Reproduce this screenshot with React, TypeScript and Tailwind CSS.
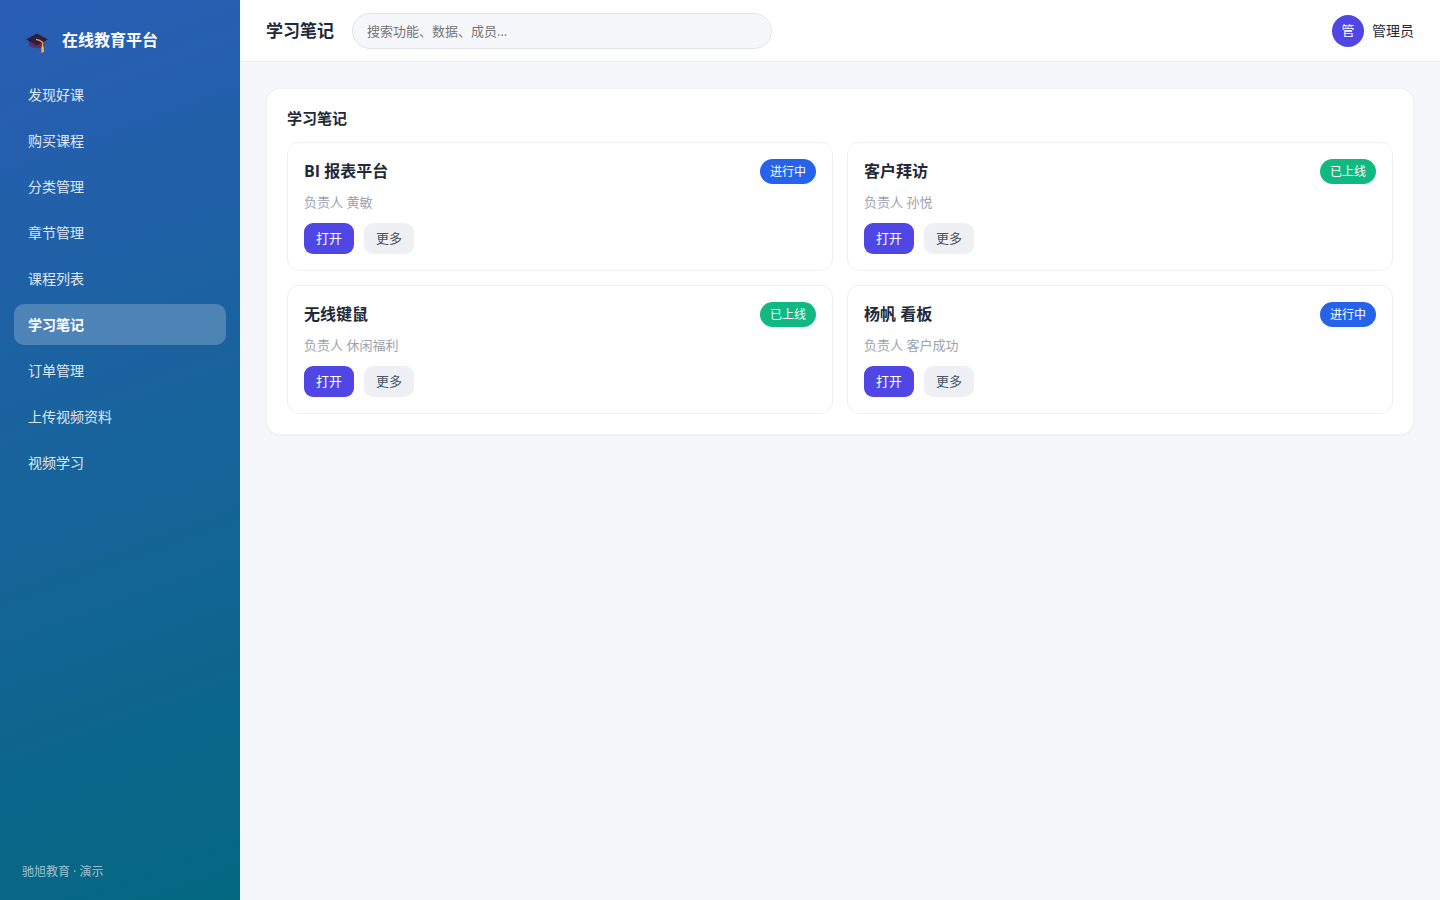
import { useState } from "react";
import { clsx } from "clsx";

type Status = "进行中" | "已上线";

interface Note {
  title: string;
  owner: string;
  status: Status;
}

const navItems = [
  "发现好课",
  "购买课程",
  "分类管理",
  "章节管理",
  "课程列表",
  "学习笔记",
  "订单管理",
  "上传视频资料",
  "视频学习",
];

const notes: Note[] = [
  { title: "BI 报表平台", owner: "黄敏", status: "进行中" },
  { title: "客户拜访", owner: "孙悦", status: "已上线" },
  { title: "无线键鼠", owner: "休闲福利", status: "已上线" },
  { title: "杨帆 看板", owner: "客户成功", status: "进行中" },
];

function CapIcon() {
  return (
    <svg width="24" height="26" viewBox="0 0 24 26" aria-hidden="true">
      <path d="M4 13v4.200c0 2.300 3.600 4 8 4 2.600 0 4.800-.5 6.200-1.500V13z" fill="#543267" />
      <path d="M12 6.600 23 12.600 15.500 16.600 12 18.200 1 12.600z" fill="#2f1c41" />
      <path d="M11 12.300c1.800.2 5.200 1.700 6.500 2.900V20.500" fill="none" stroke="#f9a52a" strokeWidth="1.200" />
      <path d="M16.400 19.600h2.300l.4 5.400-2.700.8z" fill="#fdb02c" />
    </svg>
  );
}

function Sidebar({ active, onSelect }: { active: string; onSelect: (item: string) => void }) {
  return (
    <aside className="flex w-60 shrink-0 flex-col bg-[linear-gradient(160deg,#2a5eb5,#046881)] px-3.5 pt-6 pb-[19px] text-white">
      <div className="flex h-8 items-center gap-[13px] px-[11px] text-base font-bold">
        <CapIcon />
        <span>在线教育平台</span>
      </div>
      <nav className="mt-[18px] flex flex-col gap-[5px]">
        {navItems.map((item) => (
          <a
            key={item}
            href="#"
            onClick={() => onSelect(item)}
            className={clsx(
              "rounded-[10px] px-3.5 py-[10px] text-sm leading-[21px]",
              item === active ? "bg-white/22 font-bold text-white" : "text-white/85"
            )}
          >
            {item}
          </a>
        ))}
      </nav>
      <div className="mt-auto px-2 text-xs leading-[18px] text-white/60">驰旭教育 · 演示</div>
    </aside>
  );
}

function TopBar({ title }: { title: string }) {
  return (
    <header className="flex h-[62px] items-center gap-[18px] border-b border-[#ebedf2] bg-white px-[26px]">
      <h1 className="text-[17px] font-bold">{title}</h1>
      <input
        type="search"
        aria-label="搜索"
        placeholder="搜索功能、数据、成员..."
        className="h-9 w-[420px] rounded-full border border-[#e2e5ec] bg-[#f6f7fb] px-3.5 text-[13px] outline-none placeholder:text-[#757575]"
      />
      <div className="ml-auto flex items-center gap-2 text-sm">
        <span className="flex size-8 items-center justify-center rounded-full bg-[#4f46e5] text-[13px] text-white">
          管
        </span>
        <span>管理员</span>
      </div>
    </header>
  );
}

function NoteCard({ note }: { note: Note }) {
  return (
    <article className="rounded-xl border border-[#eeeff3] p-4">
      <div className="flex items-center justify-between">
        <h3 className="text-base leading-[25px] font-bold">{note.title}</h3>
        <span
          className={clsx(
            "rounded-full px-2.5 text-xs leading-[25px] text-white",
            note.status === "进行中" ? "bg-[#2563eb]" : "bg-[#10b981]"
          )}
        >
          {note.status}
        </span>
      </div>
      <p className="mt-2 text-[13px] leading-5 text-[#9ca3af]">负责人 {note.owner}</p>
      <div className="mt-[11px] flex gap-2.5">
        <button type="button" className="h-[31px] rounded-[9px] bg-[#4f46e5] px-3 text-[13px] text-white">
          打开
        </button>
        <button type="button" className="h-[31px] rounded-[9px] bg-[#eef0f4] px-3 text-[13px] text-[#475569]">
          更多
        </button>
      </div>
    </article>
  );
}

export default function App() {
  const [active, setActive] = useState("学习笔记");

  return (
    <div className="flex min-h-screen bg-[#f5f7fb] font-['Open_Sans','Noto_Sans_CJK_SC',sans-serif] text-[#1f2937]">
      <Sidebar active={active} onSelect={setActive} />
      <div className="min-w-0 flex-1">
        <TopBar title={active} />
        <main className="p-[26px]">
          <section className="rounded-[14px] border border-[#f0f1f5] bg-white p-5 shadow-[0_1px_3px_rgba(16,24,40,0.04)]">
            <h2 className="mb-3.5 text-[15px] leading-[19px] font-bold">{active}</h2>
            <div className="grid grid-cols-2 gap-3.5">
              {notes.map((note) => (
                <NoteCard key={note.title} note={note} />
              ))}
            </div>
          </section>
        </main>
      </div>
    </div>
  );
}
